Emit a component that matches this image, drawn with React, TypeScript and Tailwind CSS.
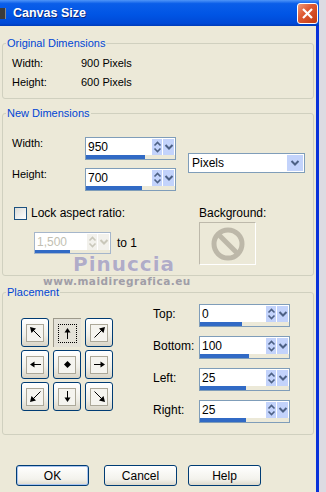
import React from 'react';

const font = { fontFamily: '"Liberation Sans", Arial, sans-serif' };

function UpDown({ dim }: { dim?: boolean }) {
  const c = dim ? '#c9c7ba' : '#4d6185';
  return (
    <svg width="9" height="16" viewBox="0 0 9 16">
      <polyline points="1.5,6.5 4.5,3.5 7.5,6.5" fill="none" stroke={c} strokeWidth="1.6" />
      <polyline points="1.5,9.5 4.5,12.5 7.5,9.5" fill="none" stroke={c} strokeWidth="1.6" />
    </svg>
  );
}

function Drop({ dim }: { dim?: boolean }) {
  const c = dim ? '#c9c7ba' : '#4d6185';
  return (
    <svg width="10" height="10" viewBox="0 0 10 10">
      <polyline points="1.5,3 5,6.5 8.5,3" fill="none" stroke={c} strokeWidth="2" />
    </svg>
  );
}

function Spin({ value, fill, className = '', disabled }: { value: string; fill: number; className?: string; disabled?: boolean }) {
  return (
    <div className={`flex flex-col border ${disabled ? 'border-[#a5b6cb] bg-white' : 'border-[#7f9db9] bg-white'} ${className}`}>
      <div className="flex flex-1">
        <span className={`flex-1 pl-[2px] pt-[2px] text-[12px] leading-[14px] ${disabled ? 'text-[#c2bfb2]' : 'text-black'}`}>{value}</span>
        <div className="flex gap-[1px] pt-[1px] pr-[1px]">
          <div className={`flex h-[16px] w-[10px] items-center justify-center ${disabled ? 'bg-[#f2f1ec]' : 'bg-[#c3d3fb]'}`}>
            <UpDown dim={disabled} />
          </div>
          <div className={`flex h-[16px] w-[11px] items-center justify-center ${disabled ? 'bg-[#f2f1ec]' : 'bg-[#c3d3fb]'}`}>
            <Drop dim={disabled} />
          </div>
        </div>
      </div>
      <div className="h-[4px] bg-[#ece9d8]">
        <div className="h-full bg-[#316ac5]" style={{ width: fill }} />
      </div>
    </div>
  );
}

function Arrow({ dir }: { dir: string }) {
  const rot: Record<string, number> = { n: 0, e: 90, s: 180, w: 270, nw: 0, ne: 90, se: 180, sw: 270 };
  if (dir === 'c') {
    return (
      <svg width="13" height="13" viewBox="0 0 13 13">
        <polygon points="6.5,3 10,6.5 6.5,10 3,6.5" fill="#000" />
      </svg>
    );
  }
  const diag = dir.length === 2;
  return (
    <svg width="13" height="13" viewBox="0 0 13 13">
      <g transform={`rotate(${rot[dir]} 6.5 6.5)`}>
        {diag ? (
          <>
            <line x1="4" y1="4" x2="11.5" y2="11.5" stroke="#000" strokeWidth="1" />
            <polygon points="1,1 7,2.5 2.5,7" fill="#000" />
          </>
        ) : (
          <>
            <line x1="6.5" y1="4" x2="6.5" y2="12" stroke="#000" strokeWidth="1" />
            <polygon points="6.5,1 3.5,5.5 9.5,5.5" fill="#000" />
          </>
        )}
      </g>
    </svg>
  );
}

function PlaceBtn({ dir }: { dir: string }) {
  if (dir === 'n') {
    return (
      <div className="flex h-[29px] w-[28px] items-center justify-center border-l border-t border-[#9d9a8c] bg-[#e4e2d8]">
        <div className="flex h-[19px] w-[19px] items-center justify-center border border-dotted border-black">
          <Arrow dir="n" />
        </div>
      </div>
    );
  }
  return (
    <div className="flex h-[29px] w-[28px] items-center justify-center rounded-[3px] border border-[#003c74] bg-[linear-gradient(to_bottom,#ffffff,#f0efe8_60%,#d8d4c6)]">
      <div className="flex h-[18px] w-[18px] items-center justify-center border border-[#aca899] bg-[#f5f4ef]">
        <Arrow dir={dir} />
      </div>
    </div>
  );
}

function Fieldset({ title, className = '', children }: { title: string; className?: string; children: React.ReactNode }) {
  return (
    <fieldset className={`ml-[2px] w-[312px] rounded-[3px] border border-[#d0d0bf] ${className}`}>
      <legend className="ml-[3px] px-[1px] text-[11px] leading-[13px] text-[#0046d5]">{title}</legend>
      {children}
    </fieldset>
  );
}

function DlgButton({ label, primary, className = '' }: { label: string; primary?: boolean; className?: string }) {
  return (
    <div className={`flex h-[21px] w-[73px] items-center justify-center rounded-[3px] border border-[#003c74] bg-[linear-gradient(to_bottom,#ffffff,#f3f2ec_70%,#dcd8cb)] text-[12px] text-black ${primary ? 'shadow-[inset_0_0_0_1px_#a9c4ef]' : ''} ${className}`}>
      {label}
    </div>
  );
}

export default function App() {
  return (
    <div className="flex h-[492px] w-[326px] overflow-hidden bg-[#dcdbe2] text-[11px] text-black" style={font}>
      <div className="flex w-[319px] flex-col">
        {/* Title bar */}
        <div className="flex h-[26px] items-center justify-between bg-[linear-gradient(to_bottom,#4f95f8_0%,#0a5ee9_14%,#0055e5_55%,#0049d6_90%,#003bb8_100%)]">
          <div className="flex items-center">
            <div className="h-[11px] w-[6px] bg-[#3b3b3b] shadow-[inset_-1px_0_0_#888]" />
            <span className="ml-[7px] text-[12.5px] font-bold leading-[16px] text-white [text-shadow:1px_1px_0_#0a2a80]">Canvas Size</span>
          </div>
          <div className="mr-[1px] flex h-[21px] w-[21px] items-center justify-center rounded-[3px] border border-white bg-[linear-gradient(135deg,#ef9a7a,#df5a33_40%,#c13a10)]">
            <svg width="13" height="13" viewBox="0 0 13 13">
              <line x1="2" y1="2" x2="11" y2="11" stroke="#fff" strokeWidth="2.2" />
              <line x1="11" y1="2" x2="2" y2="11" stroke="#fff" strokeWidth="2.2" />
            </svg>
          </div>
        </div>

        {/* Body */}
        <div className="relative flex flex-1 flex-col border-r-[3px] border-[#0831d9] bg-[#ece9d8] pt-[11px]">
          <Fieldset title="Original Dimensions" className="h-[62px]">
            <div className="grid grid-cols-[69px_1fr] gap-y-[6px] pl-[9px] pt-[7px] leading-[13px]">
              <span>Width:</span>
              <span>900 Pixels</span>
              <span>Height:</span>
              <span>600 Pixels</span>
            </div>
          </Fieldset>

          <Fieldset title="New Dimensions" className="mt-[8px] h-[169px]">
            <div className="flex pl-[9px] pt-[17px]">
              <div className="grid grid-cols-[73px_91px] gap-y-[8px]">
                <span className="leading-[13px]">Width:</span>
                <Spin value="950" fill={59} className="h-[23px]" />
                <span className="leading-[13px]">Height:</span>
                <Spin value="700" fill={56} className="h-[23px]" />
              </div>
              <div className="ml-[12px] mt-[16px] flex h-[20px] w-[117px] items-center border border-[#7f9db9] bg-white">
                <span className="flex-1 pl-[3px] text-[12px]">Pixels</span>
                <div className="mr-[1px] flex h-[16px] w-[16px] items-center justify-center bg-[#c3d3fb]">
                  <Drop />
                </div>
              </div>
            </div>
            <div className="flex pl-[11px] pt-[15px]">
              <div className="w-[184px]">
                <div className="flex items-center">
                  <div className="h-[13px] w-[13px] border border-[#1c5180] bg-[linear-gradient(135deg,#dcdcd7,#ffffff)]" />
                  <span className="ml-[4px] text-[12px] leading-[14px]">Lock aspect ratio:</span>
                </div>
                <div className="ml-[20px] mt-[12px] flex items-center">
                  <Spin value="1,500" fill={35} disabled className="h-[22px] w-[77px]" />
                  <span className="ml-[6px] text-[12px]">to 1</span>
                </div>
              </div>
              <div className="ml-[1px]">
                <div className="text-[12px] leading-[14px]">Background:</div>
                <div className="mt-[2px] flex h-[43px] w-[57px] items-center justify-center border border-b-white border-l-[#bdb9ab] border-r-white border-t-[#bdb9ab]">
                  <svg width="36" height="36" viewBox="0 0 36 36">
                    <circle cx="18" cy="18" r="14" fill="none" stroke="#bdb8a9" strokeWidth="5" />
                    <line x1="8" y1="8" x2="28" y2="28" stroke="#bdb8a9" strokeWidth="5" />
                  </svg>
                </div>
              </div>
            </div>
          </Fieldset>

          <Fieldset title="Placement" className="mt-[10px] h-[149px]">
            <div className="flex items-start pl-[18px]">
              <div className="mt-[19px] grid grid-cols-[28px_28px_28px] gap-x-[4px] gap-y-[3px]">
                {['nw', 'n', 'ne', 'w', 'c', 'e', 'sw', 's', 'se'].map((d) => (
                  <PlaceBtn key={d} dir={d} />
                ))}
              </div>
              <div className="ml-[40px] mt-[5px] flex flex-col gap-[9px]">
                {[
                  ['Top:', '0', 42],
                  ['Bottom:', '100', 49],
                  ['Left:', '25', 46],
                  ['Right:', '25', 46],
                ].map(([l, v, f]) => (
                  <div key={l as string} className="flex items-start">
                    <span className="w-[46px] pt-[3px] text-[12px] leading-[14px]">{l}</span>
                    <Spin value={v as string} fill={f as number} className="h-[23px] w-[91px]" />
                  </div>
                ))}
              </div>
            </div>
          </Fieldset>

          <div className="mt-[30px] flex pl-[16px]">
            <DlgButton label="OK" primary />
            <DlgButton label="Cancel" className="ml-[15px]" />
            <DlgButton label="Help" className="ml-[11px]" />
          </div>

          {/* watermark */}
          <div className="pointer-events-none absolute left-[73px] top-[227px] text-[20px] font-bold leading-[22px] tracking-[1px] text-[#aaa6c6] opacity-90 [text-shadow:0_0_1px_#fff]" style={{ fontFamily: '"DejaVu Sans", sans-serif' }}>
            Pinuccia
          </div>
          <div className="pointer-events-none absolute left-[43px] top-[250px] text-[10.5px] font-bold leading-[11px] tracking-[0.5px] text-[#8e8c9c] opacity-80" style={{ fontFamily: '"DejaVu Sans", sans-serif' }}>
            www.maidiregrafica.eu
          </div>
        </div>
      </div>
      <div className="flex-1 bg-[#dcdbe2]" />
    </div>
  );
}
